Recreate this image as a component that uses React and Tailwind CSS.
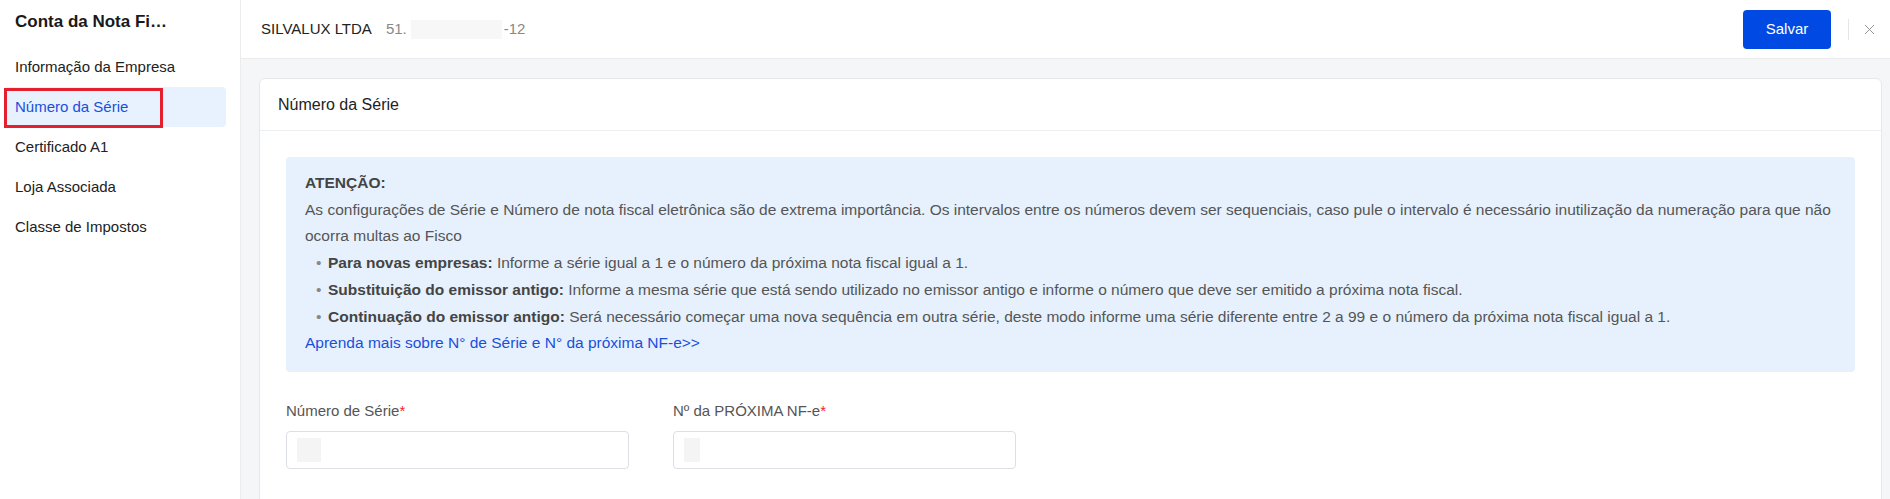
import { X } from 'lucide-react';

const menu = ['Informação da Empresa', 'Número da Série', 'Certificado A1', 'Loja Associada', 'Classe de Impostos'];

const bullets = [
  ['Para novas empresas:', ' Informe a série igual a 1 e o número da próxima nota fiscal igual a 1.'],
  ['Substituição do emissor antigo:', ' Informe a mesma série que está sendo utilizado no emissor antigo e informe o número que deve ser emitido a próxima nota fiscal.'],
  ['Continuação do emissor antigo:', ' Será necessário começar uma nova sequência em outra série, deste modo informe uma série diferente entre 2 a 99 e o número da próxima nota fiscal igual a 1.'],
];

const Field = ({ label, blur }) => (
  <div className="w-[343px]">
    <div className="text-[15px] leading-[20px] text-[#555] mb-[10px]">
      {label}<span className="text-[#f5222d]">*</span>
    </div>
    <div className="h-[38px] rounded-[4px] border border-[#dcdfe6] bg-white flex items-center pl-[10px]">
      <div className={`${blur} h-[24px] bg-[#f4f4f4]`} />
    </div>
  </div>
);

export default function App() {
  return (
    <div className="flex h-[499px] overflow-hidden bg-white text-[#222]" style={{ fontFamily: '"Liberation Sans", Arial, sans-serif' }}>
      {/* Sidebar */}
      <aside className="w-[241px] shrink-0 border-r border-[#ececec] bg-white">
        <h2 className="pl-[15px] pt-[11px] h-[47px] text-[17px] font-bold leading-[22px] text-[#1a1a1a]">Conta da Nota Fi…</h2>
        <nav className="px-[4px] flex flex-col">
          {menu.map((m) => {
            const active = m === 'Número da Série';
            return (
              <div
                key={m}
                className={`relative h-[40px] flex items-center pl-[11px] rounded-[4px] mr-[10px] text-[15px] ${
                  active ? 'bg-[#e8f2fe] text-[#1a4fdc]' : 'text-[#222]'
                }`}
              >
                {m}
                {active && <div className="absolute left-0 top-[1px] w-[159px] h-[40px] border-[3px] border-[#e5202e]" />}
              </div>
            );
          })}
        </nav>
      </aside>

      {/* Main */}
      <main className="flex-1 flex flex-col bg-[#f5f6f8]">
        <header className="h-[59px] shrink-0 bg-white border-b border-[#ececec] flex items-center pl-[20px] pr-[12px]">
          <span className="text-[15px] text-[#222]">SILVALUX LTDA</span>
          <span className="ml-[14px] text-[15px] text-[#888]">51.</span>
          <span className="ml-[4px] w-[91px] h-[19px] bg-[#f7f7f7]" />
          <span className="ml-[2px] text-[15px] text-[#888]">-12</span>
          <div className="ml-auto flex items-center">
            <button className="w-[88px] h-[39px] rounded-[4px] bg-[#004ae3] text-white text-[15px]">Salvar</button>
            <div className="ml-[17px] w-px h-[21px] bg-[#e6e6e6]" />
            <X className="ml-[12px] w-[17px] h-[17px] text-[#8c8c8c]" strokeWidth={1.3} />
          </div>
        </header>

        <div className="flex-1 pt-[19px] pl-[18px] pr-[8px]">
          <section className="bg-white border border-[#e6e8eb] rounded-[6px] h-[500px]">
            <div className="h-[52px] border-b border-[#eceef1] flex items-center pl-[18px] text-[16px] text-[#222]">
              Número da Série
            </div>
            <div className="px-[26px] pt-[26px]">
              <div className="bg-[#e6f1fd] rounded-[4px] pl-[19px] pr-[12px] pt-[13px] pb-[15px] text-[15.5px] leading-[26.7px] text-[#555]">
                <div className="font-bold text-[#444]">ATENÇÃO:</div>
                <p>
                  As configurações de Série e Número de nota fiscal eletrônica são de extrema importância. Os intervalos entre os números devem ser sequenciais, caso pule o intervalo é necessário inutilização da numeração para que não ocorra multas ao Fisco
                </p>
                <ul className="pl-[11px]">
                  {bullets.map(([b, t]) => (
                    <li key={b} className="flex">
                      <span className="w-[12px] shrink-0 text-[#888]">•</span>
                      <span>
                        <b className="text-[#444]">{b}</b>
                        {t}
                      </span>
                    </li>
                  ))}
                </ul>
                <a className="text-[#1a4fdc]">Aprenda mais sobre N° de Série e N° da próxima NF-e&gt;&gt;</a>
              </div>
              <div className="flex gap-[44px] mt-[29px]">
                <Field label="Número de Série" blur="w-[24px]" />
                <Field label="Nº da PRÓXIMA NF-e" blur="w-[16px]" />
              </div>
            </div>
          </section>
        </div>
      </main>
    </div>
  );
}
